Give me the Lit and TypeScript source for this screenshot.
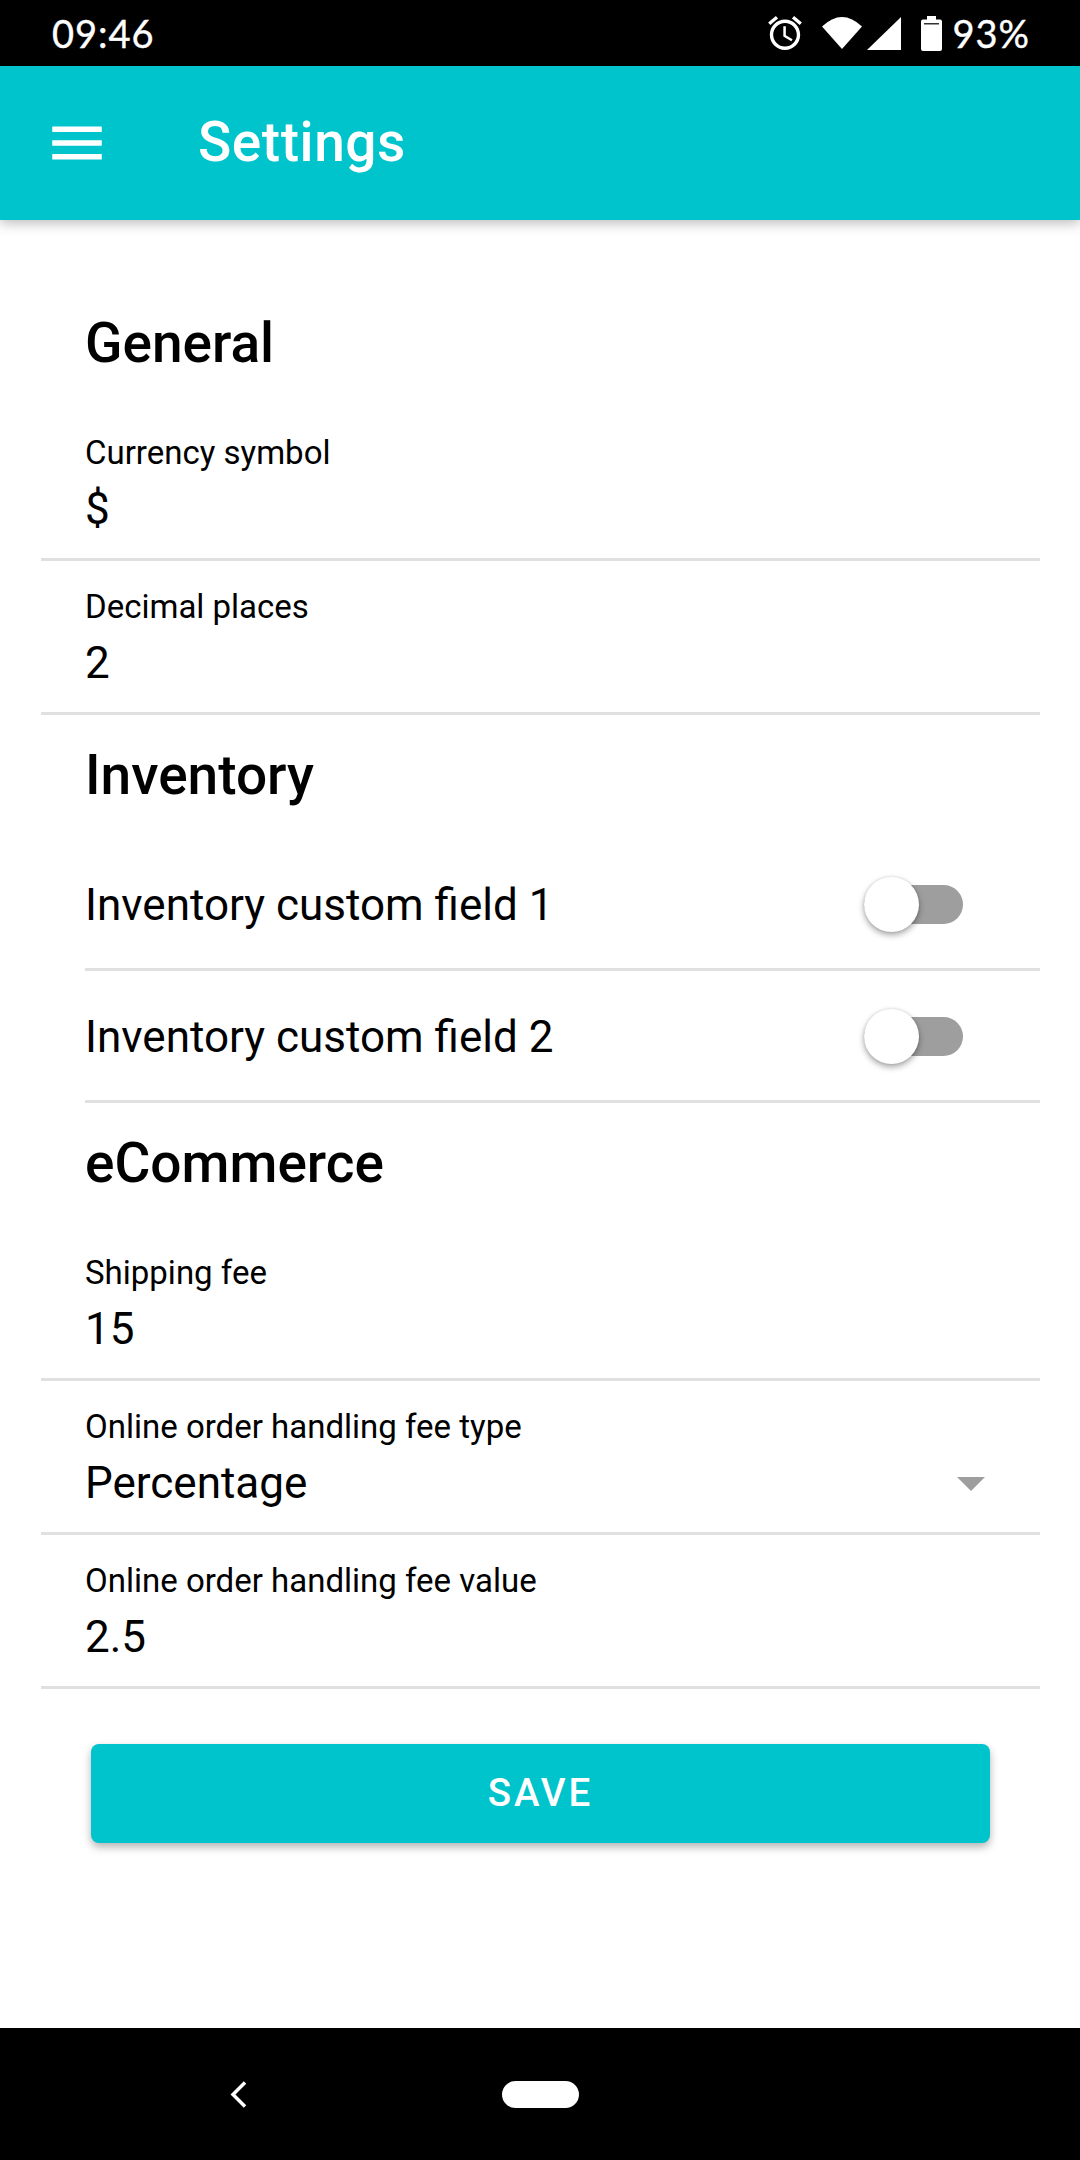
import { LitElement, html, css } from "lit";
import { customElement } from "lit/decorators.js";

@customElement("app-root")
class AppRoot extends LitElement {
  static styles = css`
    :host { display: block; width: 1080px; height: 2160px; font-family: Roboto, "Noto Sans", sans-serif; color: #000; background: #fff; }
    .page { display: flex; flex-direction: column; height: 2160px; overflow: hidden; }
    .status { height: 66px; flex: none; background: #000; color: #fff; display: flex; align-items: center; padding: 0 50px 0 52px; box-sizing: border-box; font-family: Lato, sans-serif; font-size: 38px; line-height: 66px; letter-spacing: 1px; -webkit-text-stroke: 0.4px #fff; }
    .time { flex: 1; }
    .status svg { display: block; flex: none; fill: #fff; }
    .alarm { margin-right: 20px; }
    .wifi { margin-right: 5px; }
    .signal { margin-right: 20px; }
    .battery { margin-right: 10px; }
    .appbar { height: 154px; flex: none; background: #00c4cc; color: #fff; display: flex; align-items: center; padding-left: 44px; box-shadow: 0 3px 12px rgba(0,0,0,0.28); position: relative; z-index: 1; }
    .appbar svg { display: block; fill: #fff; flex: none; }
    .title { margin: -2px 0 0 88px; font-size: 55px; font-weight: 500; letter-spacing: 0.55px; }
    .content { flex: 1; padding: 63px 40px 0 41px; }
    .heading { height: 124px; display: flex; align-items: center; padding: 0 0 4px 44px; font-size: 55px; font-weight: 500; box-sizing: border-box; }
    .field { height: 154px; box-sizing: border-box; border-bottom: 3px solid #e0e0e0; padding: 25px 44px 0; position: relative; }
    .label { font-size: 33px; line-height: 42px; }
    .value { font-size: 44px; line-height: 56px; margin-top: 7px; }
    .select { display: flex; align-items: center; justify-content: space-between; padding-right: 11px; }
    .arrow { width: 0; height: 0; margin-top: 2px; border-left: 14px solid transparent; border-right: 14px solid transparent; border-top: 14px solid #9e9e9e; }
    .row { height: 132px; box-sizing: border-box; margin-left: 44px; border-bottom: 3px solid #e0e0e0; display: flex; align-items: center; justify-content: space-between; padding: 2px 77px 0 0; font-size: 44px; }
    .switch { position: relative; width: 99px; height: 39px; }
    .track { display: block; width: 100%; height: 100%; background: #9e9e9e; border-radius: 20px; }
    .thumb { position: absolute; left: 0; top: -8px; width: 55px; height: 55px; border-radius: 50%; background: #fff; box-shadow: 0 3px 6px rgba(0,0,0,0.35), 0 0 3px rgba(0,0,0,0.12); }
    .save { display: block; width: 899px; height: 99px; margin: 55px 0 0 50px; border: 0; border-radius: 8px; background: #00c4cc; color: #fff; font-family: Roboto, sans-serif; font-size: 38.5px; font-weight: 500; letter-spacing: 2.9px; box-shadow: 0 4px 8px rgba(0,0,0,0.3); padding: 0 0 2px; }
    .nav { height: 132px; flex: none; background: #000; display: flex; align-items: center; padding-left: 230px; box-sizing: border-box; }
    .nav svg { display: block; flex: none; }
    .pill { width: 77px; height: 27px; border-radius: 13.5px; background: #fff; margin-left: 255px; }
  `;

  private field(label: string, value: string) {
    return html`<div class="field"><div class="label">${label}</div><div class="value">${value}</div></div>`;
  }

  private toggle(label: string) {
    return html`<div class="row"><span>${label}</span><div class="switch"><span class="track"></span><span class="thumb"></span></div></div>`;
  }

  render() {
    return html`
      <div class="page">
        <div class="status">
          <span class="time">09:46</span>
          <svg class="alarm" width="34" height="34" viewBox="2 1.86 20 20.14"><path d="M22 5.72l-4.6-3.86-1.29 1.53 4.6 3.86L22 5.72zM7.88 3.39L6.6 1.86 2 5.71l1.29 1.53 4.59-3.85zM12.5 8H11v6l4.75 2.85.75-1.23-4-2.37V8zM12 4c-4.97 0-9 4.03-9 9s4.02 9 9 9c4.97 0 9-4.03 9-9s-4.03-9-9-9zm0 16c-3.87 0-7-3.13-7-7s3.13-7 7-7 7 3.13 7 7-3.13 7-7 7z"/></svg>
          <svg class="wifi" width="40" height="32" viewBox="0 0 40 32"><path d="M0 9.5Q20 -9.5 40 9.5L20 32Z"/></svg>
          <svg class="signal" width="34" height="33" viewBox="0 0 34 33"><path d="M34 0V33H0Z"/></svg>
          <svg class="battery" width="21" height="35" viewBox="0 0 21 35"><path d="M6 0h9v3.500h4a2 2 0 0 1 2 2V33a2 2 0 0 1-2 2H2a2 2 0 0 1-2-2V5.500a2 2 0 0 1 2-2h4z"/><rect x="3" y="7" width="15" height="1.500" fill="#333"/></svg>
          <span>93%</span>
        </div>
        <div class="appbar">
          <svg width="66" height="66" viewBox="0 0 24 24"><path d="M3 18h18v-2H3v2zm0-5h18v-2H3v2zm0-7v2h18V6H3z"/></svg>
          <span class="title">Settings</span>
        </div>
        <div class="content">
          <div class="heading">General</div>
          ${this.field("Currency symbol", "$")}
          ${this.field("Decimal places", "2")}
          <div class="heading">Inventory</div>
          ${this.toggle("Inventory custom field 1")}
          ${this.toggle("Inventory custom field 2")}
          <div class="heading">eCommerce</div>
          ${this.field("Shipping fee", "15")}
          <div class="field">
            <div class="label">Online order handling fee type</div>
            <div class="value select"><span>Percentage</span><span class="arrow"></span></div>
          </div>
          ${this.field("Online order handling fee value", "2.5")}
          <button class="save">SAVE</button>
        </div>
        <div class="nav">
          <svg width="17" height="27" viewBox="0 0 17 27"><path d="M15 1.500L3 13.500L15 25.500" fill="none" stroke="#fff" stroke-width="3.500"/></svg>
          <div class="pill"></div>
        </div>
      </div>
    `;
  }
}
